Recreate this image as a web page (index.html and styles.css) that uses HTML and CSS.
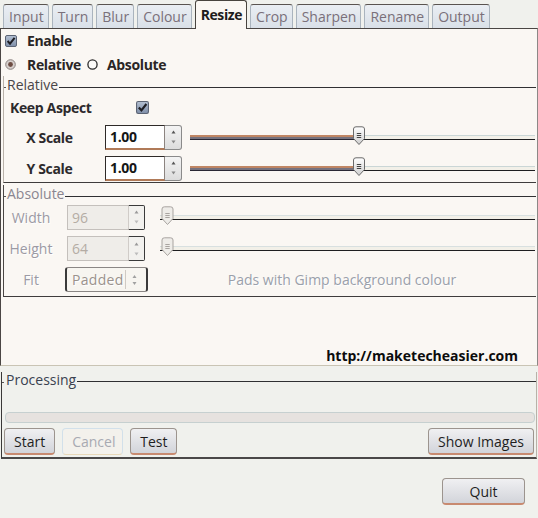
FILE: index.html
```html
<!DOCTYPE html>
<html>
<head>
<meta charset="utf-8">
<link rel="stylesheet" href="styles.css">
</head>
<body>
<div class="tabs">
  <div class="tab">Input</div>
  <div class="tab">Turn</div>
  <div class="tab">Blur</div>
  <div class="tab">Colour</div>
  <div class="tab active">Resize</div>
  <div class="tab">Crop</div>
  <div class="tab">Sharpen</div>
  <div class="tab">Rename</div>
  <div class="tab">Output</div>
</div>
<div class="page">
  <div class="opt enable">
    <svg class="chk" width="12" height="12" viewBox="0 0 12 12"><defs><linearGradient id="cg" x1="0" y1="0" x2="0" y2="1"><stop offset="0" stop-color="#b4c0d2"/><stop offset="1" stop-color="#7e8ea8"/></linearGradient></defs><rect x="0.5" y="0.5" width="11" height="11" rx="1.5" fill="url(#cg)" stroke="#5c6474"/><path d="M2.6 6 L5 8.6 L9.6 2.8" fill="none" stroke="#1e1e24" stroke-width="2"/></svg>
    <span>Enable</span>
  </div>
  <div class="opt radios">
    <svg class="rad" width="11" height="11" viewBox="0 0 11 11"><circle cx="5.5" cy="5.5" r="4.8" fill="#d6cfcc" stroke="#8c8482"/><circle cx="5.5" cy="5.5" r="2.4" fill="#6c4c42"/></svg>
    <span>Relative</span>
    <svg class="rad off" width="11" height="11" viewBox="0 0 11 11"><circle cx="5.5" cy="5.5" r="4.6" fill="#fbfaf8" stroke="#2a2a2a" stroke-width="1.3"/></svg>
    <span>Absolute</span>
  </div>

  <div class="frame rel">
    <div class="fhead"><span class="dash"></span><span class="flabel">Relative</span><span class="fline"></span></div>
    <div class="row keep">
      <span class="keep-lbl">Keep Aspect</span>
      <svg class="chk" width="13" height="13" viewBox="0 0 12 12"><rect x="0.5" y="0.5" width="11" height="11" rx="1.5" fill="url(#cg)" stroke="#5c6474"/><path d="M2.6 6 L5 8.6 L9.6 2.8" fill="none" stroke="#1e1e24" stroke-width="2"/></svg>
    </div>
    <div class="row scale">
      <span class="lbl">X Scale</span>
      <div class="spin"><span class="val">1.00</span><span class="sbtn"><svg width="9" height="20" viewBox="0 0 9 20"><path d="M2.5 6.5 L4.5 3.5 L6.5 6.5 Z" fill="#555"/><path d="M2.5 13.5 L4.5 16.5 L6.5 13.5 Z" fill="#888"/></svg></span></div>
      <div class="slider"><div class="fill" style="width:49%"></div><div class="rest"></div>
        <svg class="thumb" width="14" height="20" viewBox="0 0 14 20"><defs><linearGradient id="tg" x1="0" y1="0" x2="0" y2="1"><stop offset="0" stop-color="#ffffff"/><stop offset="1" stop-color="#cfcfcf"/></linearGradient></defs><path d="M1.5 3 Q1.5 0.8 4 0.8 H10 Q12.5 0.8 12.5 3 V12.5 L7 18.5 L1.5 12.5 Z" fill="url(#tg)" stroke="#6a6a6a"/><path d="M4.8 7.5 H9.2 M4.8 9.5 H9.2 M4.8 11.5 H9.2" stroke="#444" stroke-width="1"/></svg>
      </div>
    </div>
    <div class="row scale y">
      <span class="lbl">Y Scale</span>
      <div class="spin"><span class="val">1.00</span><span class="sbtn"><svg width="9" height="20" viewBox="0 0 9 20"><path d="M2.5 6.5 L4.5 3.5 L6.5 6.5 Z" fill="#555"/><path d="M2.5 13.5 L4.5 16.5 L6.5 13.5 Z" fill="#888"/></svg></span></div>
      <div class="slider"><div class="fill" style="width:49%"></div><div class="rest"></div>
        <svg class="thumb" width="14" height="20" viewBox="0 0 14 20"><path d="M1.5 3 Q1.5 0.8 4 0.8 H10 Q12.5 0.8 12.5 3 V12.5 L7 18.5 L1.5 12.5 Z" fill="url(#tg)" stroke="#6a6a6a"/><path d="M4.8 7.5 H9.2 M4.8 9.5 H9.2 M4.8 11.5 H9.2" stroke="#444" stroke-width="1"/></svg>
      </div>
    </div>
  </div>

  <div class="frame abs">
    <div class="fhead"><span class="dash"></span><span class="flabel">Absolute</span><span class="fline"></span></div>
    <div class="row arow w">
      <span class="albl">Width</span>
      <div class="spin dis"><span class="val">96</span><span class="sbtn"><svg width="9" height="20" viewBox="0 0 9 20"><path d="M2.5 6.5 L4.5 3.5 L6.5 6.5 Z" fill="#999"/><path d="M2.5 13.5 L4.5 16.5 L6.5 13.5 Z" fill="#bbb"/></svg></span></div>
      <div class="slider dslider"><div class="rest"></div>
        <svg class="thumb" width="15" height="20" viewBox="0 0 14 20"><path d="M1.5 3 Q1.5 0.8 4 0.8 H10 Q12.5 0.8 12.5 3 V12.5 L7 18.5 L1.5 12.5 Z" fill="#eeece8" stroke="#a8a4a0"/><path d="M4.8 7.5 H9.2 M4.8 9.5 H9.2 M4.8 11.5 H9.2" stroke="#a8a4a0" stroke-width="1"/></svg>
      </div>
    </div>
    <div class="row arow h">
      <span class="albl">Height</span>
      <div class="spin dis"><span class="val">64</span><span class="sbtn"><svg width="9" height="20" viewBox="0 0 9 20"><path d="M2.5 6.5 L4.5 3.5 L6.5 6.5 Z" fill="#999"/><path d="M2.5 13.5 L4.5 16.5 L6.5 13.5 Z" fill="#bbb"/></svg></span></div>
      <div class="slider dslider"><div class="rest"></div>
        <svg class="thumb" width="15" height="20" viewBox="0 0 14 20"><path d="M1.5 3 Q1.5 0.8 4 0.8 H10 Q12.5 0.8 12.5 3 V12.5 L7 18.5 L1.5 12.5 Z" fill="#eeece8" stroke="#a8a4a0"/><path d="M4.8 7.5 H9.2 M4.8 9.5 H9.2 M4.8 11.5 H9.2" stroke="#a8a4a0" stroke-width="1"/></svg>
      </div>
    </div>
    <div class="row arow fit">
      <span class="albl">Fit</span>
      <div class="combo"><span class="cval">Padded</span><span class="csep"></span><svg width="9" height="20" viewBox="0 0 9 20"><path d="M2.5 8 L4.5 5 L6.5 8 Z" fill="#a0a0a0"/><path d="M2.5 12 L4.5 15 L6.5 12 Z" fill="#a0a0a0"/></svg></div>
      <span class="pads">Pads with Gimp background colour</span>
    </div>
  </div>

  <div class="url">http://maketecheasier.com</div>
</div>

<div class="proc">
  <div class="fhead phead"><span class="dash"></span><span class="flabel">Processing</span><span class="fline"></span></div>
  <div class="progress"></div>
  <div class="btnrow">
    <button class="btn">Start</button>
    <button class="btn dis">Cancel</button>
    <button class="btn">Test</button>
    <span class="grow"></span>
    <button class="btn">Show Images</button>
  </div>
</div>
<div class="quitrow"><button class="btn quit">Quit</button></div>
</body>
</html>
```

FILE: styles.css
```css
* { box-sizing: border-box; margin: 0; padding: 0; }
body {
  margin: 0;
  width: 538px;
  height: 518px;
  overflow: hidden;
  background: #f0f1ed;
  font-family: "Open Sans", "DejaVu Sans", sans-serif;
  font-size: 14px;
  color: #2c2a2c;
}

/* tabs */
.tabs {
  display: flex;
  align-items: flex-end;
  gap: 3px;
  height: 28px;
  padding-left: 3px;
}
.tab {
  height: 24px;
  padding: 0 4px 0 5px;
  display: flex;
  align-items: center;
  background: linear-gradient(#eaeef3, #d9e0e8);
  border: 1px solid #aab4be;
  border-top-color: #5a5450;
  border-bottom: none;
  border-radius: 3px 3px 0 0;
  color: #7a707a;
  line-height: 1;
}
.tab.active {
  position: relative;
  z-index: 2;
  height: 29px;
  margin-bottom: -1px;
  background: #faf7f3;
  border-color: #48443f;
  color: #1e1c1c;
  font-weight: 700;
  letter-spacing: -0.4px;
}

/* notebook page */
.page {
  height: 338px;
  background: #faf7f3;
  border: 1px solid #4a4644;
  border-right-color: #8c8886;
  border-bottom-color: #c9c4b4;
  padding: 0 1px 0 2px;
  display: flex;
  flex-direction: column;
  font-weight: 700;
  letter-spacing: -0.35px;
}
.opt {
  display: flex;
  align-items: center;
  padding-left: 2px;
  color: #2a2626;
}
.enable { height: 23px; gap: 10px; }
.radios { height: 24px; }
.radios .rad { margin-right: 11px; }
.radios .rad.off { margin-left: 6px; margin-right: 9px; }

/* frames */
.frame {
  display: flex;
  flex-direction: column;
  border-left: 1px solid #b9b2aa;
  border-bottom: 1px solid #3e3c3c;
}
.fhead {
  height: 18px;
  display: flex;
  align-items: center;
  color: #4a4648;
  font-weight: 400;
  letter-spacing: 0;
}
.dash {
  width: 2px;
  height: 1px;
  margin-top: 4px;
  background: #555;
}
.flabel { line-height: 1; padding: 0 1px; }
.fline {
  flex: 1;
  height: 1px;
  margin-top: 4px;
  background: #303032;
}
.rel { padding-bottom: 1px; }
.abs { margin-top: 2px; padding-bottom: 4px; border-left-color: #4a4644; }
.abs .flabel { color: #8a8690; }

.row { display: flex; align-items: center; }
.keep { height: 26px; padding-left: 6px; }
.keep-lbl { width: 126px; }
.scale { height: 26px; margin-top: 4px; }
.scale.y { margin-top: 5px; }
.lbl { width: 91px; text-align: center; }

.spin {
  display: flex;
  height: 25px;
  margin-left: 10px;
}
.spin .val {
  width: 60px;
  display: flex;
  align-items: center;
  padding-left: 4px;
  background: #ffffff;
  border: 1px solid #8c8480;
  border-top-color: #2e2a28;
  border-left-color: #2e2a28;
  border-bottom: 2px solid #b07a58;
  color: #161616;
  font-weight: 700;
}
.spin .sbtn {
  width: 17px;
  display: flex;
  align-items: center;
  justify-content: center;
  background: linear-gradient(#f4f4f4, #dcdcdc);
  border: 1px solid #8a8a8a;
  border-left: none;
  border-radius: 0 3px 3px 0;
}

.slider {
  position: relative;
  flex: 1;
  height: 5px;
  margin: 0 1px 0 8px;
  display: flex;
}
.slider .fill {
  height: 5px;
  border-top: 2px solid #c08664;
  background: #76727e;
  border-bottom: 1px solid #2a2834;
}
.slider .rest {
  flex: 1;
  height: 5px;
  border-top: 1px solid #cad6d6;
  background: #f2f0e8;
  border-bottom: 1px solid #1e1e20;
}
.slider .thumb {
  position: absolute;
  left: 49%;
  top: -9px;
  margin-left: -7px;
}

.arow { height: 24px; }
.arow.w { margin-top: 2px; }
.arow.h { margin-top: 7px; height: 25px; }
.arow.fit { margin-top: 6px; height: 25px; }
.albl {
  width: 54px;
  text-align: center;
  color: #9c9aa4;
  font-weight: 400;
  letter-spacing: 0;
  text-shadow: 1px 1px 0 #ffffff;
}
.spin.dis { margin-left: 9px; height: 25px; }
.spin.dis .val {
  width: 61px;
  background: #efede9;
  border: 1px solid #c4c0bc;
  border-right: none;
  color: #b4aca4;
  font-weight: 400;
  letter-spacing: 0;
}
.spin.dis .sbtn {
  border-color: #3a3a3a;
  border-left: 1px solid #d0ccc8;
  background: #f2f1ee;
  border-radius: 0 2px 2px 0;
}
.dslider { margin-left: 15px; }
.dslider .rest { border-top-color: #d8e0e0; }
.dslider .thumb { left: 0; margin-left: 0; }

.combo {
  margin-left: 7px;
  width: 83px;
  height: 25px;
  display: flex;
  align-items: center;
  background: #f7f5f0;
  border: 1px solid #8a8684;
  border-left: 2px solid #3a3a3a;
  border-right: 2px solid #3a3a3a;
  border-radius: 3px;
  font-weight: 400;
  letter-spacing: 0;
}
.cval {
  width: 58px;
  padding-left: 5px;
  color: #9a928c;
  letter-spacing: 0.3px;
  text-shadow: 1px 1px 0 #fff;
}
.csep { width: 1px; height: 19px; background: #cfcac4; margin-right: 4px; }
.pads {
  flex: 1;
  text-align: center;
  color: #9aa0aa;
  font-weight: 400;
  letter-spacing: 0;
  text-shadow: 1px 1px 0 #fff;
}

.url {
  margin-top: auto;
  margin-bottom: 1px;
  align-self: flex-end;
  margin-right: 18px;
  color: #0c0c0c;
  font-weight: 700;
  line-height: 16px;
  letter-spacing: 0;
}

/* processing */
.proc {
  margin-top: 6px;
  margin-right: 1px;
  margin-left: 1px;
  border-left: 1px solid #3a3838;
  border-right: 1px solid #b8b2a8;
  border-bottom: 2px solid #4a4848;
  padding-bottom: 2px;
  display: flex;
  flex-direction: column;
}
.phead { height: 16px; }
.phead .flabel { color: #3a4250; padding-left: 2px; }
.phead .fline { margin-top: 3px; }
.progress {
  height: 11px;
  margin: 24px 1px 0 3px;
  background: #e6e2df;
  border: 1px solid #c6d0d0;
  border-radius: 4px;
}
.btnrow {
  display: flex;
  gap: 7px;
  margin-top: 5px;
  padding-left: 2px;
  padding-right: 2px;
}
.grow { flex: 1; }
.btn {
  height: 27px;
  padding: 0 9px;
  font-family: "Open Sans", "DejaVu Sans", sans-serif;
  font-size: 14px;
  color: #1e1e1e;
  background: linear-gradient(#f0f0f2, #d2d4da);
  border: 1px solid #9c948e;
  border-bottom: 2px solid #c88a70;
  border-radius: 4px;
}
.btn.dis {
  width: 61px;
  color: #a8aab2;
  background: #f3f1ec;
  border: 1px solid #d2e0ea;
  border-bottom: 1px solid #e8d8b8;
}
.quitrow {
  display: flex;
  justify-content: flex-end;
  padding-right: 13px;
  margin-top: 19px;
}
.btn.quit { width: 83px; }
```
